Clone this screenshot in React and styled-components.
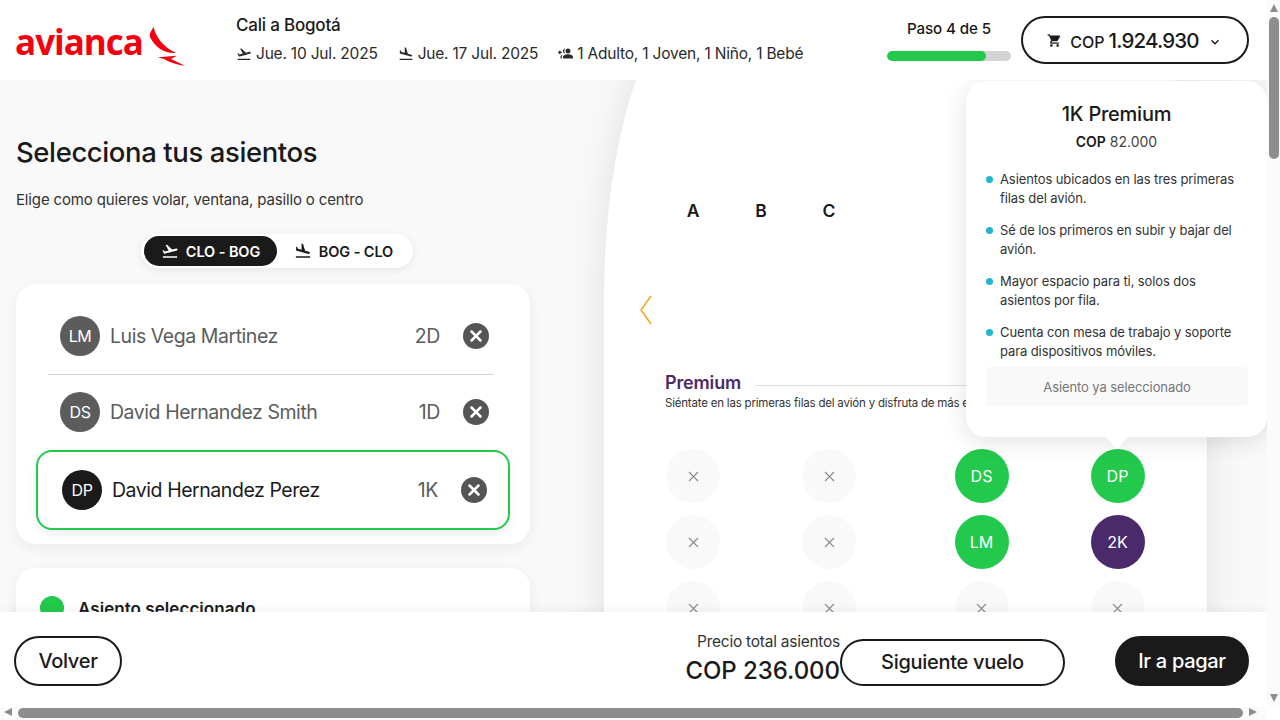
import React from "react";
import styled, { createGlobalStyle } from "styled-components";
import {
  MdFlightTakeoff,
  MdFlightLand,
  MdGroupAdd,
  MdShoppingCart,
  MdKeyboardArrowDown,
} from "react-icons/md";
import { X } from "lucide-react";

const GlobalStyle = createGlobalStyle`
  html, body {
    margin: 0;
    overflow: hidden;
    background: #fff;
  }
  * { box-sizing: border-box; }
  body {
    font-family: Inter, "Liberation Sans", sans-serif;
    color: #1a1a1a;
  }
`;

const Frame = styled.div`
  width: 1280px;
  height: 720px;
  display: grid;
  grid-template-columns: 1267px 13px;
  grid-template-rows: 707px 13px;
`;

const Viewport = styled.div`
  display: flex;
  flex-direction: column;
  overflow: hidden;
  position: relative;
`;

const VBar = styled.div`
  background: #fbfbfb;
  display: flex;
  flex-direction: column;
  align-items: center;
  justify-content: space-between;
  padding: 4px 0 0;
`;

const HBar = styled.div`
  background: #fbfbfb;
  display: flex;
  align-items: flex-start;
  padding: 1px 0 0 4px;
`;

const Thumb = styled.div`
  background: #8d8d8d;
  border-radius: 5px;
  width: ${p => (p.$vertical ? "10px" : "1225px")};
  height: ${p => (p.$vertical ? "142px" : "10px")};
  margin: ${p => (p.$vertical ? "5px 0 0" : "0 6px 0 6px")};
`;

const Arrow = styled.div`
  width: 0;
  height: 0;
  border-style: solid;
  border-color: transparent;
  ${p => p.$dir === "up" && "border-width: 0 4.5px 8px; border-bottom-color: #8d8d8d;"}
  ${p => p.$dir === "down" && "border-width: 8px 4.5px 0; border-top-color: #8d8d8d; margin-bottom: 5px;"}
  ${p => p.$dir === "left" && "border-width: 4.5px 8px 4.5px 0; border-right-color: #8d8d8d;"}
  ${p => p.$dir === "right" && "border-width: 4.5px 0 4.5px 8px; border-left-color: #8d8d8d;"}
`;

const VSpacer = styled.div`
  flex: 1;
`;

const Corner = styled.div`
  background: #fff;
`;

const Header = styled.header`
  height: 80px;
  flex: none;
  background: #fff;
  display: flex;
  align-items: center;
  padding: 0 18px 0 16px;
  position: relative;
  z-index: 3;
`;

const Logo = styled.div`
  width: 220px;
  margin-left: -1px;
  margin-right: 1px;
  display: flex;
  align-items: flex-end;
  gap: 6px;
  padding-top: 4px;
`;

const LogoWord = styled.span`
  font-family: "Open Sans", sans-serif;
  font-weight: 700;
  font-size: 35px;
  letter-spacing: -1px;
  line-height: 46px;
  color: #f5000f;
`;

const Wing = styled.svg`
  width: 37px;
  height: 40px;
  fill: #f5000f;
  margin-bottom: -1px;
`;

const Trip = styled.div`
  flex: 1;
  margin-top: -2px;
  display: flex;
  flex-direction: column;
  gap: 9px;
`;

const TripTitle = styled.div`
  font-size: 17px;
  font-weight: 500;
  line-height: 20px;
  letter-spacing: -0.2px;
`;

const TripMeta = styled.div`
  display: flex;
  gap: 20px;
  font-size: 15.5px;
  line-height: 20px;
  letter-spacing: -0.2px;
  color: #2a2a2a;
`;

const MetaItem = styled.span`
  display: flex;
  align-items: center;
  gap: 4px;
  svg { flex: none; }
`;

const Flipped = styled(MdGroupAdd)`
  transform: scaleX(-1);
`;

const Step = styled.div`
  width: 124px;
  margin-right: 10px;
  display: flex;
  flex-direction: column;
  align-items: center;
  gap: 12px;
`;

const StepLabel = styled.div`
  font-size: 15.2px;
  font-weight: 500;
  line-height: 20px;
  letter-spacing: -0.15px;
`;

const Progress = styled.div`
  width: 100%;
  height: 10px;
  border-radius: 5px;
  background: #d4d4d4;
  overflow: hidden;
`;

const ProgressFill = styled.div`
  height: 100%;
  border-radius: 5px;
  background: #22c94c;
`;

const CartButton = styled.button`
  width: 228px;
  height: 48px;
  border: 2px solid #1a1a1a;
  border-radius: 24px;
  background: #fff;
  color: #1a1a1a;
  font-family: inherit;
  display: flex;
  align-items: center;
  justify-content: center;
  padding: 0;
  svg:last-child { margin-top: 3px; }
`;

const CartCurrency = styled.span`
  font-size: 16px;
  font-weight: 500;
  margin: 3px 4px 0 8px;
`;

const CartAmount = styled.span`
  font-size: 20.5px;
  font-weight: 500;
  letter-spacing: -0.8px;
  margin-right: 8px;
`;

const Main = styled.main`
  flex: 1;
  min-height: 0;
  display: flex;
  background: #f9f9f9;
`;

const LeftColumn = styled.section`
  width: 604px;
  flex: none;
  padding: 54px 74px 0 16px;
`;

const Title = styled.h1`
  margin: 0;
  font-size: 27.5px;
  font-weight: 500;
  line-height: 36px;
  letter-spacing: -0.4px;
`;

const Subtitle = styled.p`
  margin: 19px 0 0;
  font-size: 15px;
  line-height: 22px;
  letter-spacing: -0.15px;
  color: #333;
`;

const Tabs = styled.div`
  width: 272px;
  height: 34px;
  margin: 23px 0 0 125px;
  padding: 2px 3px;
  display: flex;
  background: #fff;
  border-radius: 17px;
  box-shadow: 0 2px 8px rgba(0, 0, 0, 0.08);
`;

const Tab = styled.div`
  flex: 1;
  display: flex;
  align-items: center;
  justify-content: center;
  gap: 7px;
  border-radius: 15px;
  font-size: 14.5px;
  font-weight: 600;
  letter-spacing: -0.1px;
  background: ${p => (p.$active ? "#1a1a1a" : "transparent")};
  color: ${p => (p.$active ? "#fff" : "#1a1a1a")};
`;

const Card = styled.div`
  background: #fff;
  border-radius: 20px;
  box-shadow: 0 4px 14px rgba(0, 0, 0, 0.06);
`;

const PassengerCard = styled(Card)`
  height: 260px;
  margin-top: 16px;
  padding: 14px 20px;
`;

const PassengerRow = styled.div`
  height: ${p => (p.$selected ? "80px" : p.$divided ? "77px" : "74px")};
  display: flex;
  align-items: center;
  margin: ${p => (p.$selected ? "1px 0 0" : "0 16px 0 12px")};
  padding: ${p => (p.$selected ? "0 21px 0 24px" : "0 5px 0 12px")};
  border: ${p => (p.$selected ? "2px solid #22c94c" : "none")};
  border-bottom: ${p => (p.$divided ? "1px solid #d4d4d4" : "")};
  border-radius: ${p => (p.$selected ? "16px" : "0")};
  color: ${p => (p.$selected ? "#1a1a1a" : "#5c5c5c")};
  box-shadow: ${p => (p.$selected ? "0 3px 8px rgba(0,0,0,.08)" : "none")};
`;

const Avatar = styled.div`
  width: 40px;
  height: 40px;
  flex: none;
  border-radius: 50%;
  display: flex;
  align-items: center;
  justify-content: center;
  font-size: 16px;
  letter-spacing: -0.4px;
  color: #fff;
  background: ${p => (p.$selected ? "#1a1a1a" : "#5c5c5c")};
`;

const PassengerName = styled.div`
  flex: 1;
  margin-left: 10px;
  font-size: 19.5px;
  letter-spacing: -0.45px;
`;

const SeatCode = styled.div`
  font-size: 19.5px;
  letter-spacing: -0.4px;
  margin-right: 23px;
  color: #5c5c5c;
`;

const RemoveButton = styled.div`
  width: 26px;
  height: 26px;
  flex: none;
  border-radius: 50%;
  background: #555;
  color: #fff;
  display: flex;
  align-items: center;
  justify-content: center;
`;

const LegendCard = styled(Card)`
  height: 120px;
  margin-top: 24px;
  padding: 28px 24px;
  display: flex;
  align-items: flex-start;
  gap: 14px;
`;

const LegendDot = styled.div`
  width: 24px;
  height: 24px;
  border-radius: 50%;
  background: #22c94c;
`;

const LegendLabel = styled.div`
  margin-top: 1px;
  font-size: 17px;
  font-weight: 600;
  line-height: 24px;
  letter-spacing: 0.05px;
`;

const SeatPanel = styled.section`
  width: 603px;
  flex: none;
  margin-top: -80px;
  height: 900px;
  padding: 196px 0 0 62px;
  background: #fff;
  border-radius: 100px 100px 0 0 / 300px 300px 0 0;
  box-shadow: 0 0 40px rgba(0, 0, 0, 0.1);
`;

const Letters = styled.div`
  display: flex;
  margin-left: -7px;
`;

const Letter = styled.div`
  width: 68px;
  text-align: center;
  font-size: 17.5px;
  font-weight: 600;
  line-height: 30px;
`;

const PrevChevron = styled.svg`
  display: block;
  width: 12px;
  height: 30px;
  margin: 69px 0 0 -26px;
  fill: none;
  stroke: #f9a825;
  stroke-width: 1.6;
`;

const SectionHead = styled.div`
  margin: 46px 0 0 -1px;
  display: flex;
  align-items: center;
  gap: 14px;
`;

const SectionName = styled.div`
  font-size: 18px;
  font-weight: 600;
  line-height: 24px;
  letter-spacing: -0.15px;
  color: #4a2a6a;
`;

const SectionRule = styled.div`
  flex: 1;
  height: 1px;
  margin-top: 4px;
  background: #dedede;
`;

const SectionNote = styled.div`
  margin-left: -1px;
  font-size: 11.5px;
  line-height: 16px;
  letter-spacing: -0.2px;
  white-space: nowrap;
  color: #333;
`;

const SeatGrid = styled.div`
  margin-top: 38px;
  display: grid;
  grid-template-columns: repeat(4, 54px);
  grid-auto-rows: 54px;
  column-gap: 82px;
  row-gap: 12px;
  & > *:nth-child(4n + 3),
  & > *:nth-child(4n + 4) {
    margin-left: 16.5px;
    margin-right: -16.5px;
  }
`;

const Seat = styled.div`
  border-radius: 50%;
  display: flex;
  align-items: center;
  justify-content: center;
  font-size: 16px;
  color: ${p => (p.$kind === "empty" ? "#8a8a8a" : "#fff")};
  background: ${p =>
    p.$kind === "taken" ? "#22c94c" : p.$kind === "free" ? "#4a2a6a" : "#f9f9f9"};
`;

const Popover = styled.aside`
  position: absolute;
  top: 81px;
  left: 966px;
  width: 301px;
  height: 356px;
  padding: 18px 20px 0;
  background: #fff;
  border-radius: 20px;
  box-shadow: 0 4px 24px rgba(0, 0, 0, 0.12);
  z-index: 2;
  &::after {
    content: "";
    position: absolute;
    left: 140px;
    bottom: -12px;
    border-style: solid;
    border-width: 12px 11px 0;
    border-color: #fff transparent transparent;
  }
`;

const PopTitle = styled.div`
  text-align: center;
  font-size: 20px;
  font-weight: 500;
  line-height: 30px;
  letter-spacing: -0.25px;
`;

const PopPrice = styled.div`
  text-align: center;
  margin-top: 3px;
  font-size: 14px;
  line-height: 20px;
  color: #444;
  b { font-weight: 600; color: #1a1a1a; }
`;

const PopList = styled.ul`
  list-style: none;
  margin: 18px 0 0;
  padding: 0;
  display: flex;
  flex-direction: column;
  gap: 14px;
`;

const PopItem = styled.li`
  position: relative;
  padding-left: 14px;
  font-size: 13px;
  line-height: 18.5px;
  letter-spacing: -0.1px;
  color: #333;
  &::before {
    content: "";
    position: absolute;
    left: 0;
    top: 6px;
    width: 7px;
    height: 7px;
    border-radius: 50%;
    background: #1fb6d0;
  }
`;

const PopNotice = styled.div`
  margin-top: 7px;
  height: 39px;
  width: 262px;
  background: #f9f9f9;
  border-radius: 4px;
  display: flex;
  align-items: center;
  justify-content: center;
  font-size: 13px;
  letter-spacing: -0.1px;
  color: #777;
`;

const Footer = styled.footer`
  height: 95px;
  flex: none;
  background: #fff;
  display: flex;
  align-items: center;
  padding: 3px 18px 0 14px;
  position: relative;
  z-index: 3;
  box-shadow: 0 -2px 10px rgba(0, 0, 0, 0.05);
`;

const PillButton = styled.button`
  height: ${p => p.$height || "50px"};
  width: ${p => p.$width};
  flex: none;
  border-radius: 25px;
  border: 2px solid #1a1a1a;
  font-family: inherit;
  font-size: 20px;
  font-weight: 500;
  letter-spacing: -0.3px;
  padding: 0;
  color: ${p => (p.$dark ? "#fff" : "#1a1a1a")};
  background: ${p => (p.$dark ? "#1a1a1a" : "#fff")};
  margin-left: ${p => p.$gap || 0};
  margin-top: ${p => p.$nudge || 0};
`;

const TotalBlock = styled.div`
  margin: -4px 0 0 auto;
  text-align: right;
`;

const TotalLabel = styled.div`
  font-size: 15.5px;
  line-height: 20px;
  letter-spacing: -0.25px;
  color: #333;
`;

const TotalValue = styled.div`
  margin-top: 4px;
  font-size: 24px;
  font-weight: 500;
  line-height: 30px;
  letter-spacing: -0.05px;
`;

const passengers = [
  { initials: "LM", name: "Luis Vega Martinez", seat: "2D", divided: true },
  { initials: "DS", name: "David Hernandez Smith", seat: "1D" },
  { initials: "DP", name: "David Hernandez Perez", seat: "1K", selected: true },
];

const seats = [
  { kind: "empty" }, { kind: "empty" }, { kind: "taken", label: "DS" }, { kind: "taken", label: "DP" },
  { kind: "empty" }, { kind: "empty" }, { kind: "taken", label: "LM" }, { kind: "free", label: "2K" },
  { kind: "empty" }, { kind: "empty" }, { kind: "empty" }, { kind: "empty" },
];

const perks = [
  "Asientos ubicados en las tres primeras filas del avión.",
  "Sé de los primeros en subir y bajar del avión.",
  "Mayor espacio para ti, solos dos asientos por fila.",
  "Cuenta con mesa de trabajo y soporte para dispositivos móviles.",
];

export default function App() {
  return (
    <>
      <GlobalStyle />
      <Frame>
        <Viewport>
          <Header>
            <Logo>
              <LogoWord>avianca</LogoWord>
              <Wing viewBox="0 0 37 40">
                <path d="M4.7 .7C6 10 14 21 27 27 17 28 6 22 1 11 0 7 3 4 4.7 .7Z" />
                <path d="M8.7 31.3 27.7 29.7 22 33 36 39.7C28 39 20 36 15 33Z" />
              </Wing>
            </Logo>
            <Trip>
              <TripTitle>Cali a Bogotá</TripTitle>
              <TripMeta>
                <MetaItem><MdFlightTakeoff size={16} /> Jue. 10 Jul. 2025</MetaItem>
                <MetaItem><MdFlightLand size={16} /> Jue. 17 Jul. 2025</MetaItem>
                <MetaItem><Flipped size={15} /> 1 Adulto, 1 Joven, 1 Niño, 1 Bebé</MetaItem>
              </TripMeta>
            </Trip>
            <Step>
              <StepLabel>Paso 4 de 5</StepLabel>
              <Progress>
                <ProgressFill style={{ width: `${(4 / 5) * 100}%` }} />
              </Progress>
            </Step>
            <CartButton>
              <MdShoppingCart size={15} />
              <CartCurrency>COP</CartCurrency>
              <CartAmount>1.924.930</CartAmount>
              <MdKeyboardArrowDown size={16} />
            </CartButton>
          </Header>

          <Main>
            <LeftColumn>
              <Title>Selecciona tus asientos</Title>
              <Subtitle>Elige como quieres volar, ventana, pasillo o centro</Subtitle>
              <Tabs>
                <Tab $active><MdFlightTakeoff size={18} /> CLO - BOG</Tab>
                <Tab><MdFlightLand size={18} /> BOG - CLO</Tab>
              </Tabs>
              <PassengerCard>
                {passengers.map(p => (
                  <PassengerRow key={p.initials} $selected={p.selected} $divided={p.divided}>
                    <Avatar $selected={p.selected}>{p.initials}</Avatar>
                    <PassengerName>{p.name}</PassengerName>
                    <SeatCode>{p.seat}</SeatCode>
                    <RemoveButton><X size={18} strokeWidth={3.4} /></RemoveButton>
                  </PassengerRow>
                ))}
              </PassengerCard>
              <LegendCard>
                <LegendDot />
                <LegendLabel>Asiento seleccionado</LegendLabel>
              </LegendCard>
            </LeftColumn>

            <SeatPanel>
              <Letters>
                {["A", "B", "C"].map(l => <Letter key={l}>{l}</Letter>)}
              </Letters>
              <PrevChevron viewBox="0 0 12 30">
                <path d="M11 1 1 15l10 14" />
              </PrevChevron>
              <SectionHead>
                <SectionName>Premium</SectionName>
                <SectionRule />
              </SectionHead>
              <SectionNote>Siéntate en las primeras filas del avión y disfruta de más espacio</SectionNote>
              <SeatGrid>
                {seats.map((s, i) => (
                  <Seat key={i} $kind={s.kind}>
                    {s.label || <X size={17} strokeWidth={1.5} />}
                  </Seat>
                ))}
              </SeatGrid>
            </SeatPanel>
          </Main>

          <Popover>
            <PopTitle>1K Premium</PopTitle>
            <PopPrice><b>COP</b> 82.000</PopPrice>
            <PopList>
              {perks.map(t => <PopItem key={t}>{t}</PopItem>)}
            </PopList>
            <PopNotice>Asiento ya seleccionado</PopNotice>
          </Popover>

          <Footer>
            <PillButton $width="108px">Volver</PillButton>
            <TotalBlock>
              <TotalLabel>Precio total asientos</TotalLabel>
              <TotalValue>COP 236.000</TotalValue>
            </TotalBlock>
            <PillButton $width="225px" $height="47px" $nudge="2px">Siguiente vuelo</PillButton>
            <PillButton $width="134px" $gap="50px" $dark>Ir a pagar</PillButton>
          </Footer>
        </Viewport>

        <VBar>
          <Arrow $dir="up" />
          <Thumb $vertical />
          <VSpacer />
          <Arrow $dir="down" />
        </VBar>
        <HBar>
          <Arrow $dir="left" />
          <Thumb />
          <Arrow $dir="right" />
        </HBar>
        <Corner />
      </Frame>
    </>
  );
}
